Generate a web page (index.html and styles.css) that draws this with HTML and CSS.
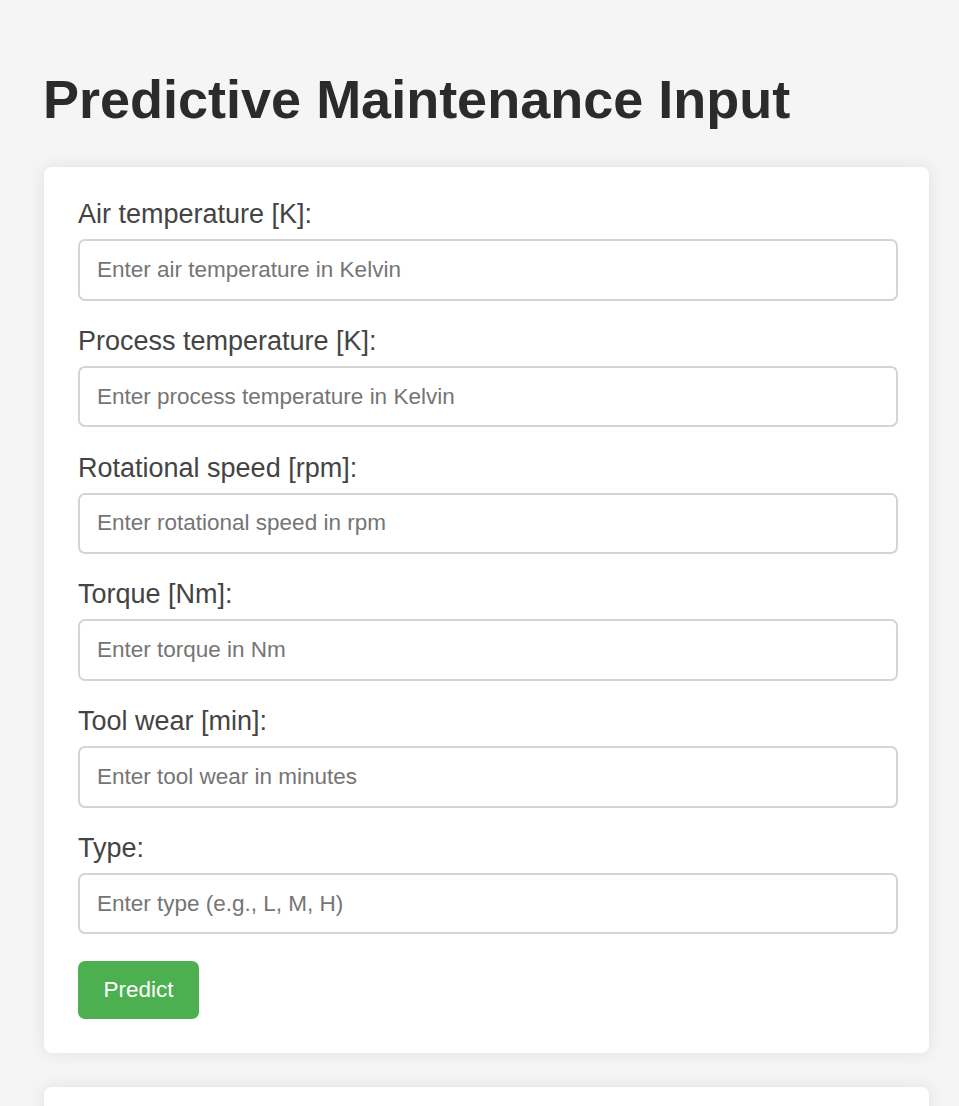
FILE: index.html
```html
<!DOCTYPE html>
<html lang="en">
<head>
<meta charset="utf-8">
<title>Predictive Maintenance Input</title>
<link rel="stylesheet" href="styles.css">
</head>
<body>
<main class="page">
  <h1 class="title">Predictive Maintenance Input</h1>
  <form class="card form">
    <label class="label" for="air">Air temperature [K]:</label>
    <input class="field" id="air" type="text" placeholder="Enter air temperature in Kelvin">
    <label class="label" for="proc">Process temperature [K]:</label>
    <input class="field" id="proc" type="text" placeholder="Enter process temperature in Kelvin">
    <label class="label" for="rpm">Rotational speed [rpm]:</label>
    <input class="field" id="rpm" type="text" placeholder="Enter rotational speed in rpm">
    <label class="label" for="torque">Torque [Nm]:</label>
    <input class="field" id="torque" type="text" placeholder="Enter torque in Nm">
    <label class="label" for="wear">Tool wear [min]:</label>
    <input class="field" id="wear" type="text" placeholder="Enter tool wear in minutes">
    <label class="label" for="type">Type:</label>
    <input class="field" id="type" type="text" placeholder="Enter type (e.g., L, M, H)">
    <button class="btn" type="button">Predict</button>
  </form>
  <section class="card result"></section>
</main>
</body>
</html>
```
FILE: styles.css
```css
html, body {
  margin: 0;
  padding: 0;
}
body {
  background: #f5f5f5;
  font-family: "Liberation Sans", Arial, sans-serif;
  color: #333;
  overflow: hidden;
}
.page {
  padding: 0 30px 0 44px;
}
.title {
  margin: 68px 0 37px -1px;
  font-size: 54px;
  font-weight: bold;
  line-height: 62px;
  color: #2b2b2b;
}
.card {
  background: #fff;
  border-radius: 8px;
  box-shadow: 0 0 17px rgba(0, 0, 0, 0.09);
}
.form {
  display: flex;
  flex-direction: column;
  align-items: flex-start;
  padding: 32px 31px 34px 34px;
}
.label {
  display: block;
  font-size: 27px;
  line-height: 31px;
  color: #444;
  margin: 0 0 9px 0;
}
.field {
  box-sizing: border-box;
  width: 820px;
  height: 61.5px;
  margin: 0 0 25.3px 0;
  padding: 0 17px;
  border: 2px solid #d4d4d4;
  border-radius: 7px;
  font-family: "Liberation Sans", Arial, sans-serif;
  font-size: 22.5px;
  color: #333;
  background: #fff;
  outline: none;
}
.field::placeholder {
  color: #757575;
}
.btn {
  margin-top: 1px;
  height: 58.5px;
  padding: 0 25.5px;
  border: none;
  border-radius: 7px;
  background: #4caf50;
  color: #fff;
  font-family: "Liberation Sans", Arial, sans-serif;
  font-size: 22.5px;
  cursor: pointer;
}
.result {
  margin-top: 34px;
  height: 200px;
}
```
